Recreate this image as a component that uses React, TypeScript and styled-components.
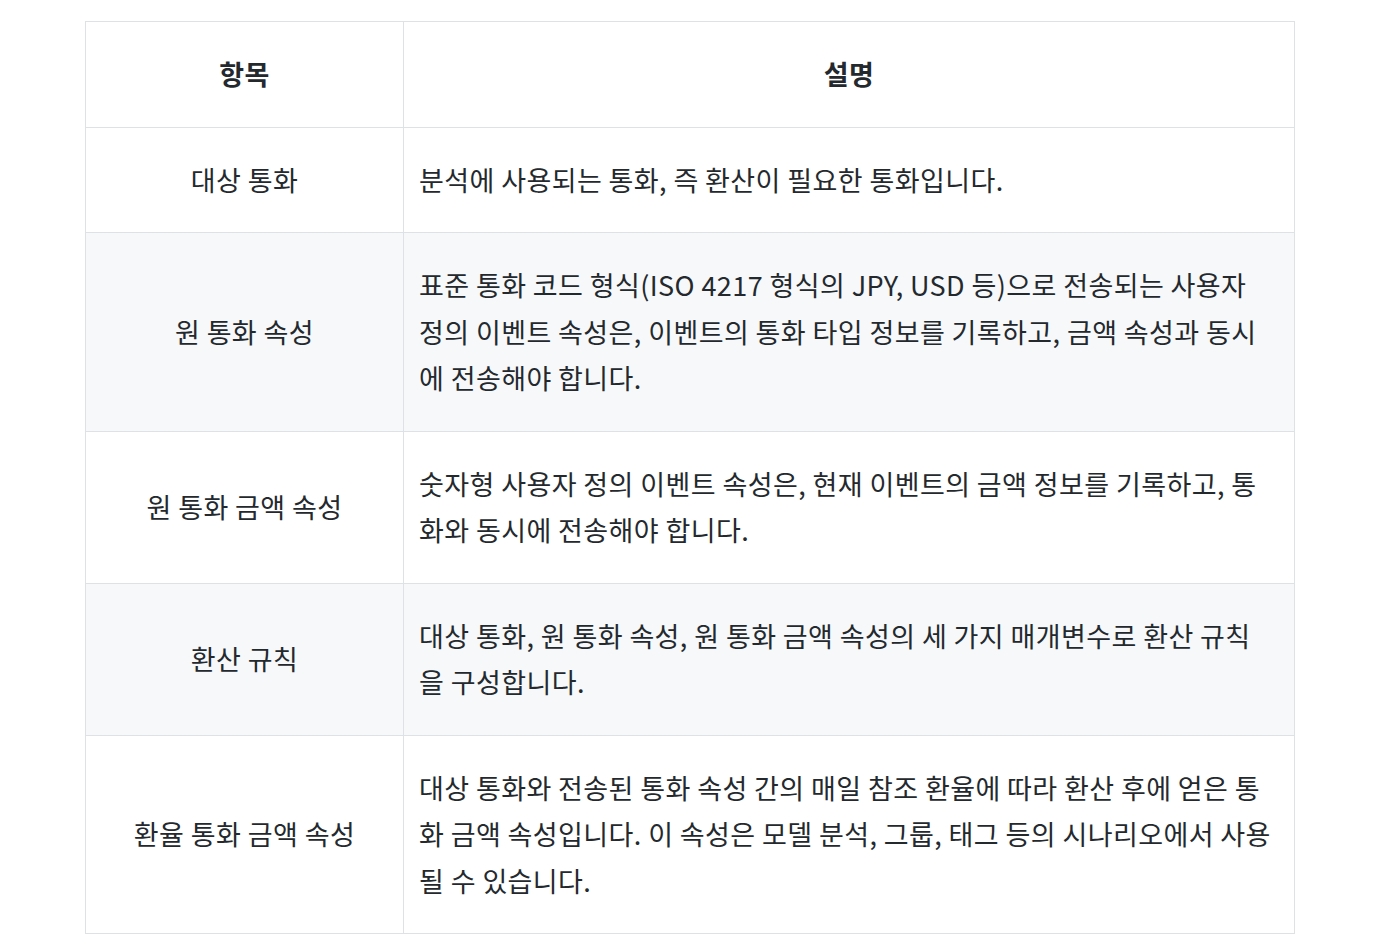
import React from "react";
import styled, { createGlobalStyle } from "styled-components";

const GlobalStyle = createGlobalStyle`
  body {
    margin: 0;
    background: #fff;
    font-family: "Noto Sans CJK KR", "Noto Sans", sans-serif;
    color: #24292e;
  }
`;

const rows = [
  {
    name: "대상 통화",
    desc: "분석에 사용되는 통화, 즉 환산이 필요한 통화입니다.",
  },
  {
    name: "원 통화 속성",
    desc: "표준 통화 코드 형식(ISO 4217 형식의 JPY, USD 등)으로 전송되는 사용자 정의 이벤트 속성은, 이벤트의 통화 타입 정보를 기록하고, 금액 속성과 동시에 전송해야 합니다.",
  },
  {
    name: "원 통화 금액 속성",
    desc: "숫자형 사용자 정의 이벤트 속성은, 현재 이벤트의 금액 정보를 기록하고, 통화와 동시에 전송해야 합니다.",
  },
  {
    name: "환산 규칙",
    desc: "대상 통화, 원 통화 속성, 원 통화 금액 속성의 세 가지 매개변수로 환산 규칙을 구성합니다.",
  },
  {
    name: "환율 통화 금액 속성",
    desc: "대상 통화와 전송된 통화 속성 간의 매일 참조 환율에 따라 환산 후에 얻은 통화 금액 속성입니다. 이 속성은 모델 분석, 그룹, 태그 등의 시나리오에서 사용될 수 있습니다.",
  },
];

const Page = styled.div`
  padding: 21px 93px 17px 85px;
`;

const Table = styled.table`
  width: 1210px;
  border-collapse: collapse;
  font-size: 27px;
  line-height: 46.5px;
  letter-spacing: 0.4px;
`;

const HeadCell = styled.th`
  border: 1px solid #dfe2e5;
  padding: 29px 16px;
  font-weight: 700;
  text-align: center;
  color: #24292e;
`;

const Row = styled.tr<{ $striped: boolean }>`
  background: ${(p) => (p.$striped ? "#f6f8fa" : "#fff")};
`;

const Cell = styled.td<{ $center?: boolean }>`
  border: 1px solid #dfe2e5;
  padding: ${(p) => (p.$center ? "29px 16px" : "29px 19px 29px 15px")};
  text-align: ${(p) => (p.$center ? "center" : "left")};
  vertical-align: middle;
  color: #24292e;
`;

export default function App() {
  return (
    <>
      <GlobalStyle />
      <Page>
        <Table>
          <colgroup>
            <col style={{ width: 318 }} />
            <col />
          </colgroup>
          <thead>
            <tr>
              <HeadCell>항목</HeadCell>
              <HeadCell>설명</HeadCell>
            </tr>
          </thead>
          <tbody>
            {rows.map((r, i) => (
              <Row key={r.name} $striped={i % 2 === 1}>
                <Cell $center>{r.name}</Cell>
                <Cell>{r.desc}</Cell>
              </Row>
            ))}
          </tbody>
        </Table>
      </Page>
    </>
  );
}
